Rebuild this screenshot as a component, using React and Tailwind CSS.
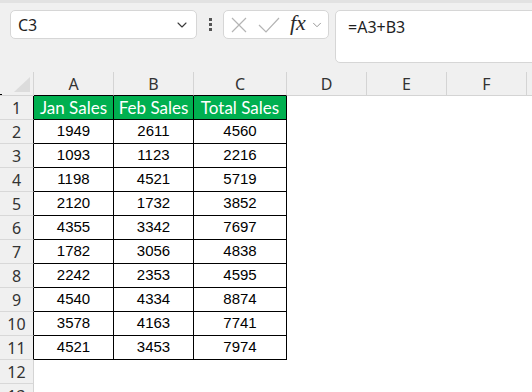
import { ChevronDown } from "lucide-react"

const data = [
  [1949, 2611, 4560],
  [1093, 1123, 2216],
  [1198, 4521, 5719],
  [2120, 1732, 3852],
  [4355, 3342, 7697],
  [1782, 3056, 4838],
  [2242, 2353, 4595],
  [4540, 4334, 8874],
  [3578, 4163, 7741],
  [4521, 3453, 7974],
]

const cols = [
  { name: "A", w: "w-[80px]" },
  { name: "B", w: "w-[80px]" },
  { name: "C", w: "w-[93px]" },
  { name: "D", w: "w-[80px]" },
  { name: "E", w: "w-[80px]" },
  { name: "F", w: "w-[80px]" },
]

const ui = { fontFamily: '"Noto Sans", "Open Sans", sans-serif' }

export default function App() {
  return (
    <div className="w-[532px] h-[392px] overflow-hidden bg-white" style={ui}>
      {/* Formula bar */}
      <div className="h-[72px] bg-[#f0f0f0] border-t-[3px] border-[#e2e2e2] flex items-start pl-[10px] pt-[7px] overflow-hidden">
        <div className="shrink-0 w-[187px] h-[29px] bg-white border border-[#d6d6d6] rounded-[5px] flex items-center justify-between pl-[7px] pr-[6px]">
          <span className="text-[16px] text-[#1f1f1f] leading-none">C3</span>
          <ChevronDown size={16} strokeWidth={1.6} className="text-[#3a3a3a]" />
        </div>
        <div className="shrink-0 w-[26px] h-[29px] flex flex-col items-center justify-center gap-[2px]">
          <span className="w-[3px] h-[3px] bg-[#555]" />
          <span className="w-[3px] h-[3px] bg-[#555]" />
          <span className="w-[3px] h-[3px] bg-[#555]" />
        </div>
        <div className="shrink-0 w-[106px] h-[29px] bg-white border border-[#d6d6d6] rounded-[5px] flex items-center pl-[7px]">
          <svg width="16" height="16" viewBox="0 0 16 16" className="shrink-0">
            <path d="M1 1 L15 15 M15 1 L1 15" stroke="#b4b4b4" strokeWidth="1.2" fill="none" />
          </svg>
          <svg width="22" height="16" viewBox="0 0 22 16" className="shrink-0 ml-[11px]">
            <path d="M1 8 L8 15 L21 1" stroke="#b4b4b4" strokeWidth="1.2" fill="none" />
          </svg>
          <span
            className="ml-[10px] text-[22px] italic text-[#2a2a2a] leading-none -mt-[3px]"
            style={{ fontFamily: '"Liberation Serif", "DejaVu Serif", serif' }}
          >
            fx
          </span>
          <ChevronDown size={14} strokeWidth={1.5} className="shrink-0 text-[#8a8a8a] ml-[4px]" />
        </div>
        <div className="shrink-0 ml-[6px] w-[220px] h-[53px] bg-white border border-[#d6d6d6] rounded-[5px] pl-[12px] pt-[4px]">
          <span className="text-[16px] text-[#1f1f1f] leading-none">=A3+B3</span>
        </div>
      </div>

      {/* Column headers */}
      <div className="flex h-[24px] bg-[#f0f0f0]">
        <div className="relative shrink-0 w-[34px] h-full border-r border-b border-[#d4d4d4]">
          <svg width="16" height="15" viewBox="0 0 16 15" className="absolute left-[14px] top-[5px]">
            <polygon points="16,0 16,15 0,15" fill="#dcdcdc" />
          </svg>
          <span className="absolute left-0 bottom-0 w-[2px] h-[1px] bg-black" />
        </div>
        {cols.map((c, i) => (
          <div
            key={c.name}
            className={`${c.w} shrink-0 h-full flex items-center justify-center border-r border-[#d4d4d4] border-b ${i < 3 ? "border-b-black" : ""} text-[16px] text-[#333]`}
          >
            {c.name}
          </div>
        ))}
        <div className="flex-1 border-b border-[#d4d4d4]" />
      </div>

      {/* Rows */}
      <div className="flex flex-col">
        <Row n={1} header>
          {["Jan Sales", "Feb Sales", "Total Sales"]}
        </Row>
        {data.map((r, i) => (
          <Row key={i} n={i + 2}>
            {r}
          </Row>
        ))}
        <Row n={12} empty />
        <Row n={13} empty />
      </div>
    </div>
  )
}

function Row({ n, children, header = false, empty = false }) {
  return (
    <div className="flex h-[24px] shrink-0">
      <div
        className={`shrink-0 w-[34px] h-full bg-[#f0f0f0] border-b border-[#d8d8d8] border-r ${empty ? "border-r-[#d4d4d4]" : "border-r-black"} flex items-center justify-center text-[16px] text-[#333]`}
      >
        {n}
      </div>
      {!empty &&
        children.map((v, i) => (
          <div
            key={i}
            className={`${i === 2 ? "w-[93px]" : "w-[80px]"} shrink-0 h-full border-r border-b border-black flex items-center justify-center ${
              header ? "bg-[#00b050] text-white text-[17px]" : "bg-white text-black text-[15px]"
            }`}
            style={{
              fontFamily: header
                ? 'Lato, "Noto Sans", sans-serif'
                : '"Liberation Sans", Arial, sans-serif',
            }}
          >
            {v}
          </div>
        ))}
      <div className="flex-1 bg-white" />
    </div>
  )
}
